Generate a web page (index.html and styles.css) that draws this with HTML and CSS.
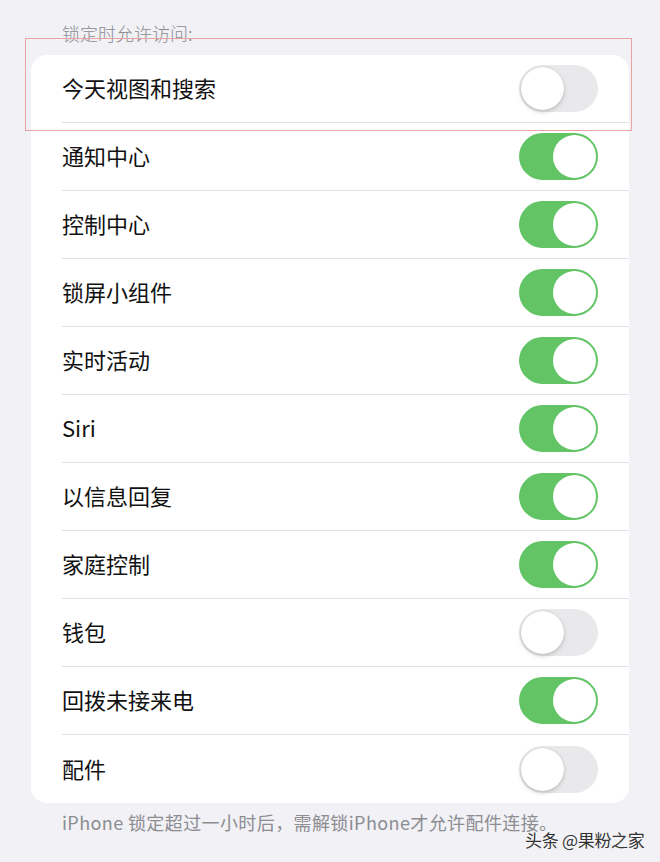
FILE: index.html
```html
<!DOCTYPE html>
<html lang="zh-CN">
<head>
    <meta charset="UTF-8">
    <title>锁定时允许访问</title>
    <link rel="stylesheet" href="styles.css">
</head>
<body>
  <div class="page">
    <div class="header">锁定时允许访问:</div>

    <div class="card">
      <div class="row"><span class="label">今天视图和搜索</span><span class="toggle"></span></div>
      <div class="row"><span class="label">通知中心</span><span class="toggle on"></span></div>
      <div class="row"><span class="label">控制中心</span><span class="toggle on"></span></div>
      <div class="row"><span class="label">锁屏小组件</span><span class="toggle on"></span></div>
      <div class="row"><span class="label">实时活动</span><span class="toggle on"></span></div>
      <div class="row"><span class="label">Siri</span><span class="toggle on"></span></div>
      <div class="row"><span class="label">以信息回复</span><span class="toggle on"></span></div>
      <div class="row"><span class="label">家庭控制</span><span class="toggle on"></span></div>
      <div class="row"><span class="label">钱包</span><span class="toggle"></span></div>
      <div class="row"><span class="label">回拨未接来电</span><span class="toggle on"></span></div>
      <div class="row"><span class="label">配件</span><span class="toggle"></span></div>
    </div>

    <div class="footer">iPhone 锁定超过一小时后，需解锁iPhone才允许配件连接。</div>

    <div class="mark"></div>
    <div class="watermark">头条 @果粉之家</div>
  </div>
</body>
</html>
```

FILE: styles.css
```css
body { margin: 0; background: #f1f1f6; font-family: "Noto Sans CJK SC", "Noto Sans", sans-serif; }
.page { position: relative; width: 660px; height: 862px; overflow: hidden; }
.header { padding: 20px 0 0 62px; height: 35px; font-size: 18px; line-height: 26px; color: #8c8c91; font-weight: 300; }
.card { margin: 0 31px; background: #fff; border-radius: 16px; overflow: hidden; }
.row { display: flex; align-items: center; justify-content: space-between; height: 68px; margin-left: 31px; padding-right: 31px; border-bottom: 1px solid #e2e2e6; box-sizing: border-box; }
.row:last-child { border-bottom: none; }
.label { font-size: 22px; color: #111; padding-bottom: 3px; }
.toggle { position: relative; width: 79px; height: 47px; border-radius: 24px; background: #e9e9eb; }
.toggle::after { content: ""; position: absolute; top: 2px; left: 2px; width: 43px; height: 43px; border-radius: 50%; background: #fff; box-shadow: 0 2px 4px rgba(0,0,0,0.18), 0 0 1px rgba(0,0,0,0.2); }
.toggle.on { background: #63c466; }
.toggle.on::after { left: 34px; box-shadow: none; }
.footer { padding: 6px 0 0 62px; font-size: 18px; line-height: 26px; color: #8c8c91; letter-spacing: 0.4px; }
.mark { position: absolute; left: 25px; top: 38px; width: 605px; height: 91px; border: 1px solid #eaa3a0; }
.watermark { position: absolute; left: 525px; top: 827px; font-size: 17px; color: #333; text-shadow: 0 0 2px #fff; letter-spacing: -0.3px; }
```
